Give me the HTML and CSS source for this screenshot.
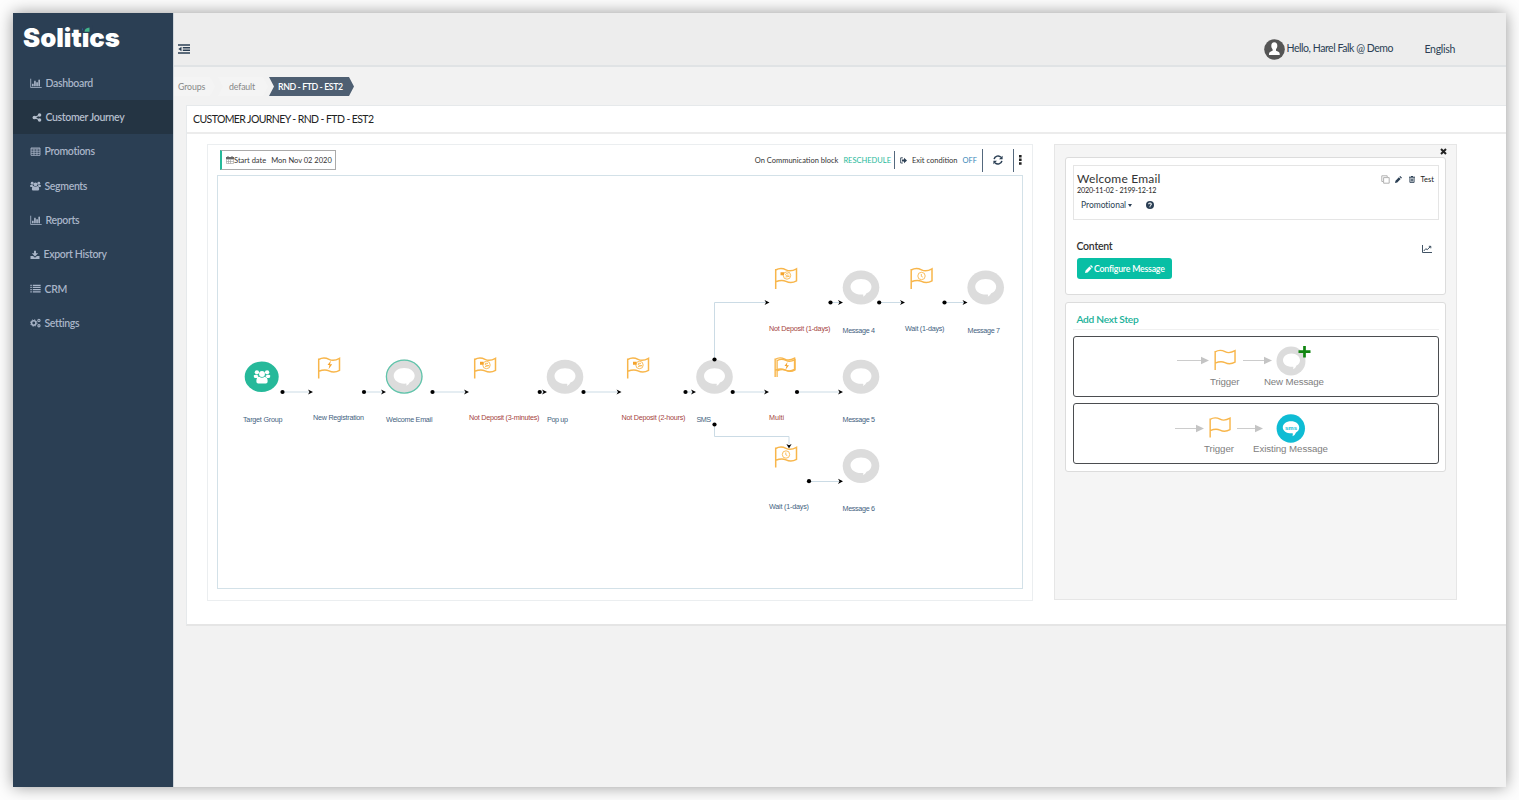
FILE: index.html
```
<!DOCTYPE html>
<html lang="en">
<head>
<meta charset="utf-8">
<title>Solitics - Customer Journey</title>
<link rel="stylesheet" href="styles.css">
</head>
<body>
<svg class="defs" width="0" height="0">
  <symbol id="chart" viewBox="0 0 16 14"><path d="M.6 1v12.4H16M3.5 11.5V8.5M6.5 11.5V5M9.500 11.500V6.500M12.500 11.500V2.500" fill="none" stroke="currentColor" stroke-width="1.2"/><path d="M3.5 11.5V8M6.5 11.5V4M9.500 11.500V6M12.500 11.500V2.500" fill="none" stroke="currentColor" stroke-width="2"/></symbol>
  <symbol id="share" viewBox="0 0 14 14"><path d="M11 3 3.500 7 11 11" fill="none" stroke="currentColor" stroke-width="1.8"/><g fill="currentColor"><circle cx="11" cy="3" r="2.700"/><circle cx="3" cy="7" r="2.900"/><circle cx="11" cy="11" r="2.700"/></g></symbol>
  <symbol id="table" viewBox="0 0 16 14"><path d="M1 1.500h14v11.500H1zM1 3h14M1 6.500h14M1 9.800h14M5.600 3v10M10.300 3v10" fill="none" stroke="currentColor" stroke-width="1.300"/></symbol>
  <symbol id="users" viewBox="0 0 18 16"><g fill="currentColor"><circle cx="3.600" cy="3.500" r="2.300"/><circle cx="14.400" cy="3.500" r="2.300"/><circle cx="9" cy="5.300" r="3.100"/><path d="M0 7q2-2 5 0v2.600H1.500Q0 9.500 0 7zM18 7q-2-2-5 0v2.600h3.500Q18 9.500 18 7zM3 13q0-4.500 3-4.800 3 2 6 0 3 .3 3 4.800 0 2.500-2 2.500H5Q3 15.500 3 13z"/></g></symbol>
  <symbol id="download" viewBox="0 0 14 14"><path d="M5.500 1h3v4H12L7 10 2 5h3.500zM0 9.500h4L7 12l3-2.500h4V14H0z" fill="currentColor"/></symbol>
  <symbol id="list" viewBox="0 0 16 14"><path d="M0 2h2.200M3.800 2H16M0 5.400h2.200M3.800 5.400H16M0 8.800h2.200M3.800 8.800H16M0 12.200h2.200M3.800 12.200H16" stroke="currentColor" stroke-width="2"/></symbol>
  <symbol id="cogs" viewBox="0 0 16 14"><g fill="none" stroke="currentColor"><circle cx="5.500" cy="7" r="3.200" stroke-width="2.200"/><circle cx="5.500" cy="7" r="4.700" stroke-width="1.400" stroke-dasharray="1.900 1.800"/><circle cx="13" cy="3.200" r="1.600" stroke-width="1.600"/><circle cx="13" cy="11" r="1.600" stroke-width="1.600"/></g></symbol>
  <symbol id="pencil" viewBox="0 0 14 14"><path d="M0 14l1-4.500 6.800-6.800 3.500 3.500L4.500 13zM8.800 1.700 10.500 0 14 3.500l-1.700 1.700z" fill="currentColor"/></symbol>
  <symbol id="flag" viewBox="0 0 23 22" overflow="visible"><path d="M1.200 21.500V1.500M1.200 2.500C5 .2 8.500.7 11.500 2.300S18.500 3.300 22 1.300V13.300C18.500 15.300 15 15.500 11.500 13.800S5 12.700 1.200 14.300" fill="none" stroke="#f8b64b" stroke-width="1.500"/></symbol>
  <symbol id="msg" viewBox="-19 -18 38 36" overflow="visible"><ellipse rx="18.300" ry="17" fill="#dcdcdc"/><path d="M0-8.500C6-8.500 10.500-5 10.500-.8 10.500 2.200 8.500 4.500 5.500 5.800Q4.500 8 2 9.200 2.500 8 2.200 6.900C-5 7.800-10.500 4-10.500-.8-10.500-5-6-8.500 0-8.500Z" fill="#fff"/></symbol>
</svg>
<div class="app">
  <aside class="sidebar">
    <svg class="logo" viewBox="0 -4 110 38" width="110" height="38"><text x="0" y="23" textLength="97" lengthAdjust="spacingAndGlyphs">Solitics</text><path class="logo-bg" d="M60 1h9.500v7.800H60z"/><path class="logo-dot" d="M61.500 7.800q.2-3.900 5-4.300v4.300z"/></svg>
    <nav class="nav">
      <a class="item"><svg width="12" height="10"><use href="#chart"/></svg><span>Dashboard</span></a>
      <a class="item active"><svg width="10" height="9"><use href="#share"/></svg><span>Customer Journey</span></a>
      <a class="item"><svg width="11" height="9"><use href="#table"/></svg><span>Promotions</span></a>
      <a class="item"><svg width="11" height="10"><use href="#users"/></svg><span>Segments</span></a>
      <a class="item"><svg width="12" height="10"><use href="#chart"/></svg><span>Reports</span></a>
      <a class="item"><svg width="10" height="9"><use href="#download"/></svg><span>Export History</span></a>
      <a class="item"><svg width="11" height="9"><use href="#list"/></svg><span>CRM</span></a>
      <a class="item"><svg width="11" height="10"><use href="#cogs"/></svg><span>Settings</span></a>
    </nav>
  </aside>
  <div class="main">
    <header class="topbar">
      <svg class="burger" width="12" height="10" viewBox="0 0 12 10"><path d="M0 1h12M4.800 3.700H12M4.800 6.300H12M0 9h12" stroke="#2b3f54" stroke-width="1.600"/><path d="M3.500 2.700v4.600L.3 5z" fill="#2b3f54"/></svg>
      <div class="user"><svg width="21" height="21" viewBox="0 0 21 21"><circle cx="10.500" cy="10.500" r="10.300" fill="#555"/><path d="M10.300 3.200c2 0 3 1.500 3 3.500 0 1.700-.6 2.700-1.300 3.500v1.600c1.500.7 3.700 1.200 3.700 3v1.300H5v-1.300c0-1.800 2.100-2.300 3.600-3v-1.600c-.8-.8-1.300-1.800-1.300-3.500 0-2 1-3.500 3-3.500z" fill="#fff"/></svg><span>Hello, Harel Falk @ Demo</span></div>
      <span class="lang">English</span>
    </header>
    <div class="crumbs"><a class="crumb c1">Groups</a><a class="crumb c2">default</a><a class="crumb current">RND - FTD - EST2</a></div>
    <section class="panel">
      <h1>CUSTOMER JOURNEY - RND - FTD - EST2</h1>
      <div class="columns">
        <div class="journey">
          <div class="tools">
            <div class="start"><svg width="8" height="8" viewBox="0 0 8 8"><path d="M.5 1.500h7v6h-7zM.5 3.500h7M2.500 3.500v4M4.500 3.500v4M.5 5.500h7" fill="none" stroke="#999" stroke-width=".6"/><path d="M0 1h8v2H0zM1.500 0h1v2h-1zM5.500 0h1v2h-1z" fill="#666"/></svg><span class="sd">Start date</span><span class="dt">Mon Nov 02 2020</span></div>
            <div class="right">
              <span class="comm">On Communication block</span><span class="resch">RESCHEDULE</span><i class="bar"></i>
              <svg class="exit" width="7" height="7" viewBox="0 0 7 7"><path d="M2.800.8H.7v5.200h2.100" fill="none" stroke="#2b3f54" stroke-width=".9"/><path d="M2 2.400h2V.8l3 2.700-3 2.700V4.600H2z" fill="#2b3f54"/></svg>
              <span class="econd">Exit condition</span><span class="off">OFF</span><i class="bar tall b2"></i>
              <svg class="refresh" width="10" height="10" viewBox="0 0 10 10"><path d="M1.100 4.200A4 4 0 0 1 8 2.300M8.900 5.800A4 4 0 0 1 2 7.700" fill="none" stroke="#2b3f54" stroke-width="1.500"/><path d="M9.600.7v3.600H6zM.4 9.300V5.700H4z" fill="#2b3f54"/></svg>
              <i class="bar tall b3"></i>
              <svg class="dots" width="3" height="10" viewBox="0 0 3 10"><path d="M0 0h2.600v2.500H0zM0 3.600h2.600v2.500H0zM0 7.200h2.600v2.500H0z" fill="#222"/></svg>
            </div>
          </div>
          <svg class="canvas" viewBox="218 176 804 412">
            <g class="wires">
              <path d="M283 392h28M364 392h20M433 392h34M541 392h4M584 392h35M686 392h8M733 392h34M797 392h44M714.500 359.500V302.500H767M830 302.500h11M879 302.500h24M944.500 302.500h20M714.500 424.500V436.500H789V444M809 481.500h32"/>
            </g>
            <g class="ends">
              <circle cx="282.500" cy="392" r="2.100"/><circle cx="364" cy="392" r="2.100"/><circle cx="432.500" cy="392" r="2.100"/><circle cx="539.700" cy="392" r="2.100"/><circle cx="583.500" cy="392" r="2.100"/><circle cx="685.500" cy="392" r="2.100"/><circle cx="732.700" cy="392" r="2.100"/><circle cx="797" cy="392" r="2.100"/><circle cx="830.500" cy="302.500" r="2.100"/><circle cx="879.200" cy="302.500" r="2.100"/><circle cx="944.500" cy="302.500" r="2.100"/><circle cx="714.500" cy="424.500" r="2.100"/><circle cx="809" cy="481.200" r="2.100"/>
            </g>
            <g class="tips">
              <path d="M313 392l-5-2.600 1.500 2.600-1.500 2.600zM386 392l-5-2.600 1.500 2.600-1.500 2.600zM469 392l-5-2.600 1.500 2.600-1.500 2.600zM547 392l-5-2.600 1.500 2.600-1.500 2.600zM621.500 392l-5-2.600 1.500 2.600-1.500 2.600zM696 392l-5-2.600 1.500 2.600-1.500 2.600zM769 392l-5-2.600 1.500 2.600-1.500 2.600zM843 392l-5-2.600 1.500 2.600-1.500 2.600zM769.500 302.500l-5-2.600 1.500 2.600-1.500 2.600zM843 302.500l-5-2.600 1.500 2.600-1.500 2.600zM905 302.500l-5-2.600 1.500 2.600-1.500 2.600zM967.500 302.500l-5-2.600 1.500 2.600-1.500 2.600zM843 481.300l-5-2.600 1.500 2.600-1.500 2.600zM789 448.500l-2.600-4.500 2.600 1.200 2.600-1.200z"/>
            </g>
            <ellipse cx="261.700" cy="376.800" rx="17" ry="15.300" fill="#26b99a"/>
            <svg class="people" x="253.500" y="369" width="17" height="15" viewBox="0 0 18 16" preserveAspectRatio="none"><use href="#users"/></svg>
            <use href="#msg" x="385.200" y="358.600" width="38" height="36"/>
            <ellipse cx="404.200" cy="376.600" rx="17.800" ry="16.500" fill="none" stroke="#5fc5ab" stroke-width="1.300"/>
            <use href="#msg" x="546" y="358.800" width="38" height="36"/>
            <use href="#msg" x="695.500" y="358.800" width="38" height="36"/>
            <use href="#msg" x="842" y="358.800" width="38" height="36"/>
            <use href="#msg" x="842" y="269.500" width="38" height="36"/>
            <use href="#msg" x="966.700" y="269.500" width="38" height="36"/>
            <use href="#msg" x="842" y="448" width="38" height="36"/>
            <circle cx="714.500" cy="359.500" r="2.100"/>
            <use href="#flag" x="317.500" y="357" width="23" height="22"/>
            <use href="#flag" x="473.500" y="357" width="23" height="22"/>
            <use href="#flag" x="626.500" y="357" width="23" height="22"/>
            <use href="#flag" x="774.500" y="267.500" width="23" height="22"/>
            <use href="#flag" x="910" y="267.500" width="23" height="22"/>
            <use href="#flag" x="774" y="357" width="21.500" height="20.500"/>
            <use href="#flag" x="776" y="358.500" width="20" height="19"/>
            <use href="#flag" x="774.500" y="446" width="23" height="22"/>
            <path d="M331 360.500l-3.500 4.500h2l-1 4.200 3.700-5h-2.200zM787.500 362l-3 4h2l-1 3.800 3.500-4.600h-2.200z" fill="#f5a32c"/>
            <g class="coin"><circle cx="486.500" cy="365" r="3.700"/><circle cx="639.500" cy="365" r="3.700"/><circle cx="787" cy="275.500" r="3.700"/><path d="M488 363.500q-3-1-3 .5t3 1.500-3 1M641 363.500q-3-1-3 .5t3 1.500-3 1M788.500 274q-3-1-3 .5t3 1.500-3 1"/></g>
            <path d="M480 361.700h3.500v3H480zM633 361.700h3.500v3H633zM780.500 272.200h3.500v3h-3.500z" fill="#f5a32c"/>
            <g class="clock"><circle cx="921.500" cy="276" r="3.700"/><circle cx="786" cy="454.500" r="3.700"/><path d="M921.300 274v2.300l1.500.8M785.800 452.500v2.300l1.500.8"/></g>
            <g class="labels">
              <text x="243" y="422" textLength="39.500">Target Group</text>
              <text x="313" y="420" textLength="51">New Registration</text>
              <text x="386" y="422" textLength="46.500">Welcome Email</text>
              <text class="red" x="469" y="420" textLength="70.500">Not Deposit (3-minutes)</text>
              <text x="547" y="422" textLength="21">Pop up</text>
              <text class="red" x="621.500" y="420" textLength="64">Not Deposit (2-hours)</text>
              <text x="696.500" y="422" textLength="14.500">SMS</text>
              <text class="red" x="769" y="420" textLength="15">Multi</text>
              <text x="842.500" y="422" textLength="32.500">Message 5</text>
              <text class="red" x="769" y="330.500" textLength="61.500">Not Deposit (1-days)</text>
              <text x="842.500" y="332.500" textLength="32.500">Message 4</text>
              <text x="905" y="330.500" textLength="39.500">Wait (1-days)</text>
              <text x="967.500" y="332.500" textLength="32.500">Message 7</text>
              <text x="769" y="509" textLength="40">Wait (1-days)</text>
              <text x="842.500" y="511.200" textLength="32.500">Message 6</text>
            </g>
          </svg>
        </div>
        <aside class="detail">
          <div class="close"><svg width="7" height="7" viewBox="0 0 7 7"><path d="M1 1l5 5M6 1 1 6" stroke="#222" stroke-width="2"/></svg></div>
          <div class="card message">
            <div class="box">
              <div class="info">
                <h2>Welcome Email</h2>
                <p class="dates">2020-11-02 - 2199-12-12</p>
                <div class="kind"><span>Promotional</span><i class="caret"></i><svg width="8" height="8" viewBox="0 0 8 8"><circle cx="4" cy="4" r="4" fill="#2b3f54"/><path d="M2.700 3.200Q2.700 2 4 2T5.300 3.200Q5.300 4 4 4.500M4 5.200v1" fill="none" stroke="#fff" stroke-width="1.100"/></svg></div>
              </div>
              <div class="acts">
                <svg width="9" height="9" viewBox="0 0 9 9" fill="none" stroke="#aaa" stroke-width=".9"><path d="M2 6.500H.8V.8h5.400V2M2.600 2.600h5.600v5.600H2.600z"/></svg>
                <svg class="pen" width="7" height="7"><use href="#pencil"/></svg>
                <svg class="bin" width="6" height="7" viewBox="0 0 6 7"><path d="M0 1.200h6M2 .5h2" stroke="#2b3f54" stroke-width="1"/><path d="M.9 1.500v4.900h4.200V1.500M2.300 2.500v3M3.700 2.500v3" fill="none" stroke="#2b3f54" stroke-width=".9"/></svg>
                <span>Test</span>
              </div>
            </div>
            <div class="content"><h3>Content</h3><svg width="10" height="8" viewBox="0 0 10 8"><path d="M.5 0v7.500H10M1.800 6l2-2.300 1.400 1L8.500 1.500M6.800 1.300h2v2" fill="none" stroke="#2b3f54" stroke-width=".9"/></svg></div>
            <button class="configure"><svg width="8" height="8"><use href="#pencil"/></svg><span>Configure Message</span></button>
          </div>
          <div class="card next">
            <h3>Add Next Step</h3>
            <div class="step"><svg viewBox="1074 337 364 59" width="364" height="59">
              <path class="gray-line" d="M1177 360.500h25M1243 360.500h23"/><path d="M1201 356.800l8 3.700-8 3.700zM1264 356.800l8 3.700-8 3.700z" fill="#c4c4c4"/>
              <use href="#flag" x="1213" y="349.500" width="24" height="21"/>
              <circle cx="1291" cy="361" r="14.500" fill="#dcdcdc"/><path d="M1291.500 353.500c5 0 8.500 3 8.500 6.800 0 2.500-1.500 4.300-3.500 5.300q-.8 2.700-3.500 3.700.5-1.500.3-2.500c-6 .5-10.300-2.500-10.300-6.500 0-3.800 3.500-6.800 8.500-6.800z" fill="#fff"/>
              <path d="M1304.500 346v11.500M1298.500 351.700h12" stroke="#118511" stroke-width="2.700"/>
              <text x="1210" y="385.300" textLength="29.500">Trigger</text><text x="1264" y="384.800" textLength="60">New Message</text>
            </svg></div>
            <div class="step"><svg viewBox="1074 404.500 364 59" width="364" height="59">
              <path class="gray-line" d="M1175 429h23M1237 429h19"/><path d="M1196 425.300l8 3.700-8 3.700zM1255 425.300l8 3.700-8 3.700z" fill="#c4c4c4"/>
              <use href="#flag" x="1209" y="417.500" width="22" height="21"/>
              <circle cx="1290.800" cy="429" r="14.200" fill="#0fbcd4"/><path d="M1291 421.800c4.800 0 8.200 2.700 8.200 6.200 0 2.200-1.200 3.900-3.200 5q-.8 2.600-3.500 3.800.5-1.700.2-3c-5.700.4-9.900-2.200-9.900-5.800 0-3.500 3.400-6.200 8.200-6.200z" fill="#fff"/>
              <text class="sms" x="1285" y="430" textLength="12" lengthAdjust="spacingAndGlyphs">sms</text>
              <text x="1204" y="452.500" textLength="30">Trigger</text><text x="1253" y="452.500" textLength="75">Existing Message</text>
            </svg></div>
          </div>
        </aside>
      </div>
    </section>
  </div>
</div>
</body>
</html>
```
FILE: styles.css
```
* { box-sizing: border-box; }
body { margin: 0; height: 800px; padding: 13px; overflow: hidden; background: #fdfdfd; font-family: Lato, sans-serif; color: #2b3f54; }
h1, h2, h3, p { margin: 0; }
svg { display: block; flex: none; }
.defs { position: absolute; }
.app { display: flex; width: 1493px; height: 774px; box-shadow: 0 0 15px rgba(0,0,0,.4); }
.sidebar { width: 160px; background: #2b3f54; padding-top: 7px; }
.logo { margin-left: 9.500px; }
.logo text { font: 900 26px Inter, sans-serif; fill: #fff; }
.logo-bg { fill: #2b3f54; }
.logo-dot { fill: #43b68c; }
.nav { padding-top: 7.600px; }
.item { display: flex; align-items: center; height: 34.300px; padding-left: 17px; gap: 3.500px; font-size: 10.500px; font-weight: 600; letter-spacing: -.34px; color: #a9b5c8; white-space: nowrap; }
.active { background: #243443; padding-left: 19px; color: #b4becc; }
.main { flex: 1; min-width: 0; background: #f2f2f2; border-left: 1px solid #cfd5da; }
.topbar { display: flex; align-items: center; height: 54px; padding: 20px 51px 0 4px; background: #ededed; border-bottom: 2px solid #e0e3e5; font-size: 10.500px; letter-spacing: -.45px; white-space: nowrap; }
.user { display: flex; align-items: center; gap: 2px; margin-left: auto; }
.user span { padding-bottom: 2px; }
.lang { margin-left: 31.500px; letter-spacing: -.3px; }
.crumbs { display: flex; height: 38px; padding-top: 10px; font-size: 8.800px; letter-spacing: -.15px; color: #888; line-height: 19px; }
.crumb { height: 19px; white-space: nowrap; background: #f4f4f4; }
.c1 { width: 41px; padding-left: 4px; clip-path: polygon(0 0, 36px 0, 100% 50%, 36px 100%, 0 100%); }
.c2 { width: 50px; margin-left: 3px; padding-left: 11px; clip-path: polygon(0 0, 45px 0, 100% 50%, 45px 100%, 0 100%, 5px 50%); }
.current { width: 85px; margin-left: 1px; padding-left: 9px; background: #4e5f72; color: #fff; font-weight: 600; letter-spacing: -.42px; clip-path: polygon(0 0, 80px 0, 100% 50%, 80px 100%, 0 100%, 5px 50%); }
.panel { height: 521px; margin-left: 12px; background: #fff; border: 1px solid #e6e9eb; border-right: 0; border-bottom: 2px solid #e5e5e5; }
.panel h1 { height: 28px; line-height: 27px; padding-left: 6px; border-bottom: 2px solid #ececec; font-size: 10.500px; font-weight: 400; letter-spacing: -.6px; color: #222; }
.columns { display: flex; gap: 21px; padding: 10px 0 0 20px; }
.journey { width: 826px; height: 457px; border: 1px solid #ebeef0; padding: 3px 9px 0 9px; }
.tools { display: flex; height: 27px; align-items: flex-start; font-size: 7.500px; color: #333; white-space: nowrap; }
.start { display: flex; align-items: center; width: 116px; height: 20px; margin: 2px 0 0 3px; padding-left: 4px; border: 1px solid #aaa; border-left: 2px solid #26b99a; }
.dt { margin-left: 5px; }
.right { display: flex; align-items: center; height: 24px; margin-left: auto; padding-right: 1px; }
.resch { color: #26b99a; margin-left: 5px; }
.off { color: #3487b8; margin-left: 5px; }
.bar { width: 1px; height: 18px; margin-left: 3px; background: #54687d; }
.tall { height: 23px; }
.exit { margin: 0 5px; }
.b2 { margin-left: 5px; }
.refresh { margin: 0 10px; }
.b3 { margin-left: 0; }
.dots { margin-left: 5px; }
.canvas { width: 806px; height: 414px; border: 1px solid #d3e1e8; }
.wires path { fill: none; stroke: #cbdbe5; stroke-width: 1; }
.people { color: #fff; }
.coin, .clock { fill: none; stroke: #f8b64b; stroke-width: .9; }
.labels text { font: 7.200px "Liberation Sans", sans-serif; fill: #435f80; }
.labels .red { fill: #a54440; }
.detail { width: 403px; height: 456px; background: #f5f5f5; border: 1px solid #e6e6e6; padding: 0 10px; }
.close { display: flex; justify-content: flex-end; align-items: center; height: 12px; }
.close svg { margin-right: -1px; }
.card { border: 1px solid #dcdcdc; border-radius: 3px; background: #fff; padding: 7px 6px 7px 7px; }
.message { height: 138px; }
.box { display: flex; justify-content: space-between; height: 55px; padding: 0 4px 0 3px; border: 1px solid #e5e5e5; }
.box h2 { font-size: 12px; line-height: 14px; margin-top: 6px; font-weight: 400; color: #333; letter-spacing: .2px; }
.dates { font-size: 7.200px; line-height: 10px; letter-spacing: -.2px; color: #222; }
.kind { display: flex; align-items: center; padding: 3px 0 0 4px; font-size: 8.500px; line-height: 13px; letter-spacing: -.03px; }
.kind svg { margin: -2px 0 0 14px; }
.caret { margin-left: 2px; border: 2.500px solid transparent; border-top: 3px solid #2b3f54; border-bottom: 0; }
.acts { display: flex; align-items: center; height: 9px; margin-top: 9px; font-size: 7.500px; color: #222; }
.pen { margin-left: 5px; color: #2b3f54; }
.bin { margin: 0 6px 0 7px; }
.content { display: flex; justify-content: space-between; align-items: flex-end; height: 34px; padding: 0 7px 0 3.500px; }
.content svg { margin-bottom: 1px; }
.content h3 { font-size: 10.500px; line-height: 15px; font-weight: 600; letter-spacing: -.25px; color: #333; }
.configure { display: flex; align-items: center; gap: 1px; width: 95px; height: 21px; margin: 4px 0 0 4px; padding: 0 0 0 8px; border: 0; border-radius: 3px; background: #08bfa5; color: #fff; font: 600 8.800px Lato, sans-serif; letter-spacing: -.23px; white-space: nowrap; }
.next { height: 170px; margin-top: 7px; }
.next h3 { height: 20px; line-height: 19px; padding-left: 3.500px; margin-bottom: 6px; border-bottom: 1px solid #f0f0f0; font-size: 10.200px; font-weight: 600; letter-spacing: -.28px; color: #20b199; }
.step { height: 61px; margin-bottom: 6px; border: 1px solid #4b4d50; border-radius: 3px; }
.gray-line { stroke: #ccc; fill: none; }
.step text { font: 9.700px "Liberation Sans", sans-serif; fill: #808080; }
.step .sms { font-size: 5px; font-weight: 700; fill: #0fbcd4; }
```
